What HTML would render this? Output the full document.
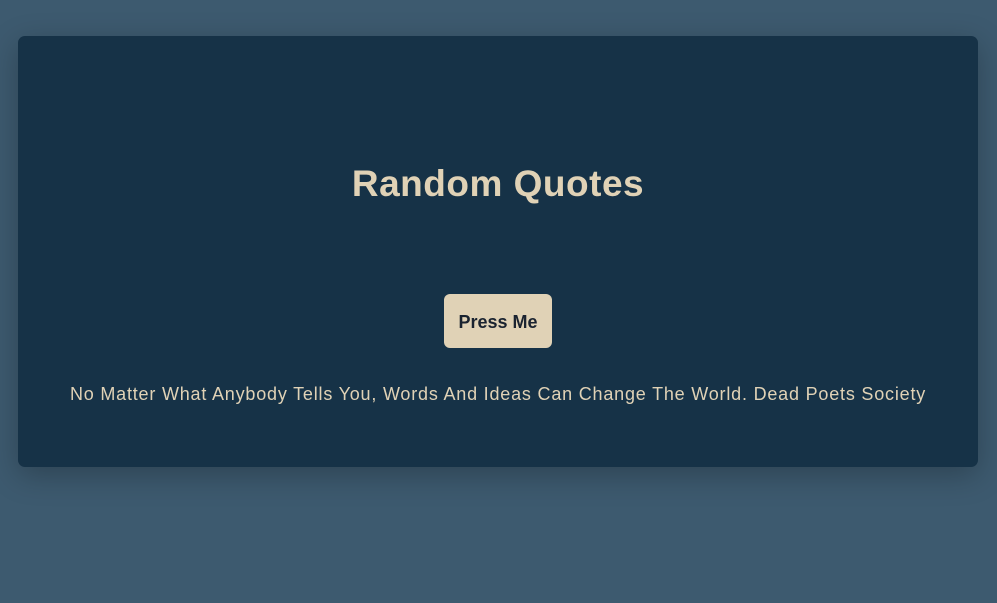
<!DOCTYPE html>
<html><head><style>
html,body{margin:0;padding:0;}
body{width:997px;height:603px;background:#3d5a6f;font-family:"Liberation Sans",sans-serif;position:relative;overflow:hidden;}
.card{position:absolute;left:18px;top:36px;width:960px;height:431px;background:#163247;border-radius:7px;box-shadow:0 8px 30px rgba(0,0,0,0.25);}
h1{position:absolute;left:0;right:0;top:126px;margin:0;text-align:center;color:#e0d2b6;font-size:37px;font-weight:bold;line-height:44px;letter-spacing:0.5px;}
.btn{position:absolute;left:426px;top:258px;width:108px;height:54px;background:#e0d2b6;border-radius:6px;color:#1a2330;font-weight:bold;font-size:18px;line-height:56px;text-align:center;}
.q{position:absolute;left:0;right:0;top:346px;text-align:center;color:#e0d2b6;font-size:18px;line-height:24px;letter-spacing:0.8px;}
</style></head><body>
<div class="card">
<h1>Random Quotes</h1>
<div class="btn">Press Me</div>
<div class="q">No Matter What Anybody Tells You, Words And Ideas Can Change The World. Dead Poets Society</div>
</div>
</body></html>
